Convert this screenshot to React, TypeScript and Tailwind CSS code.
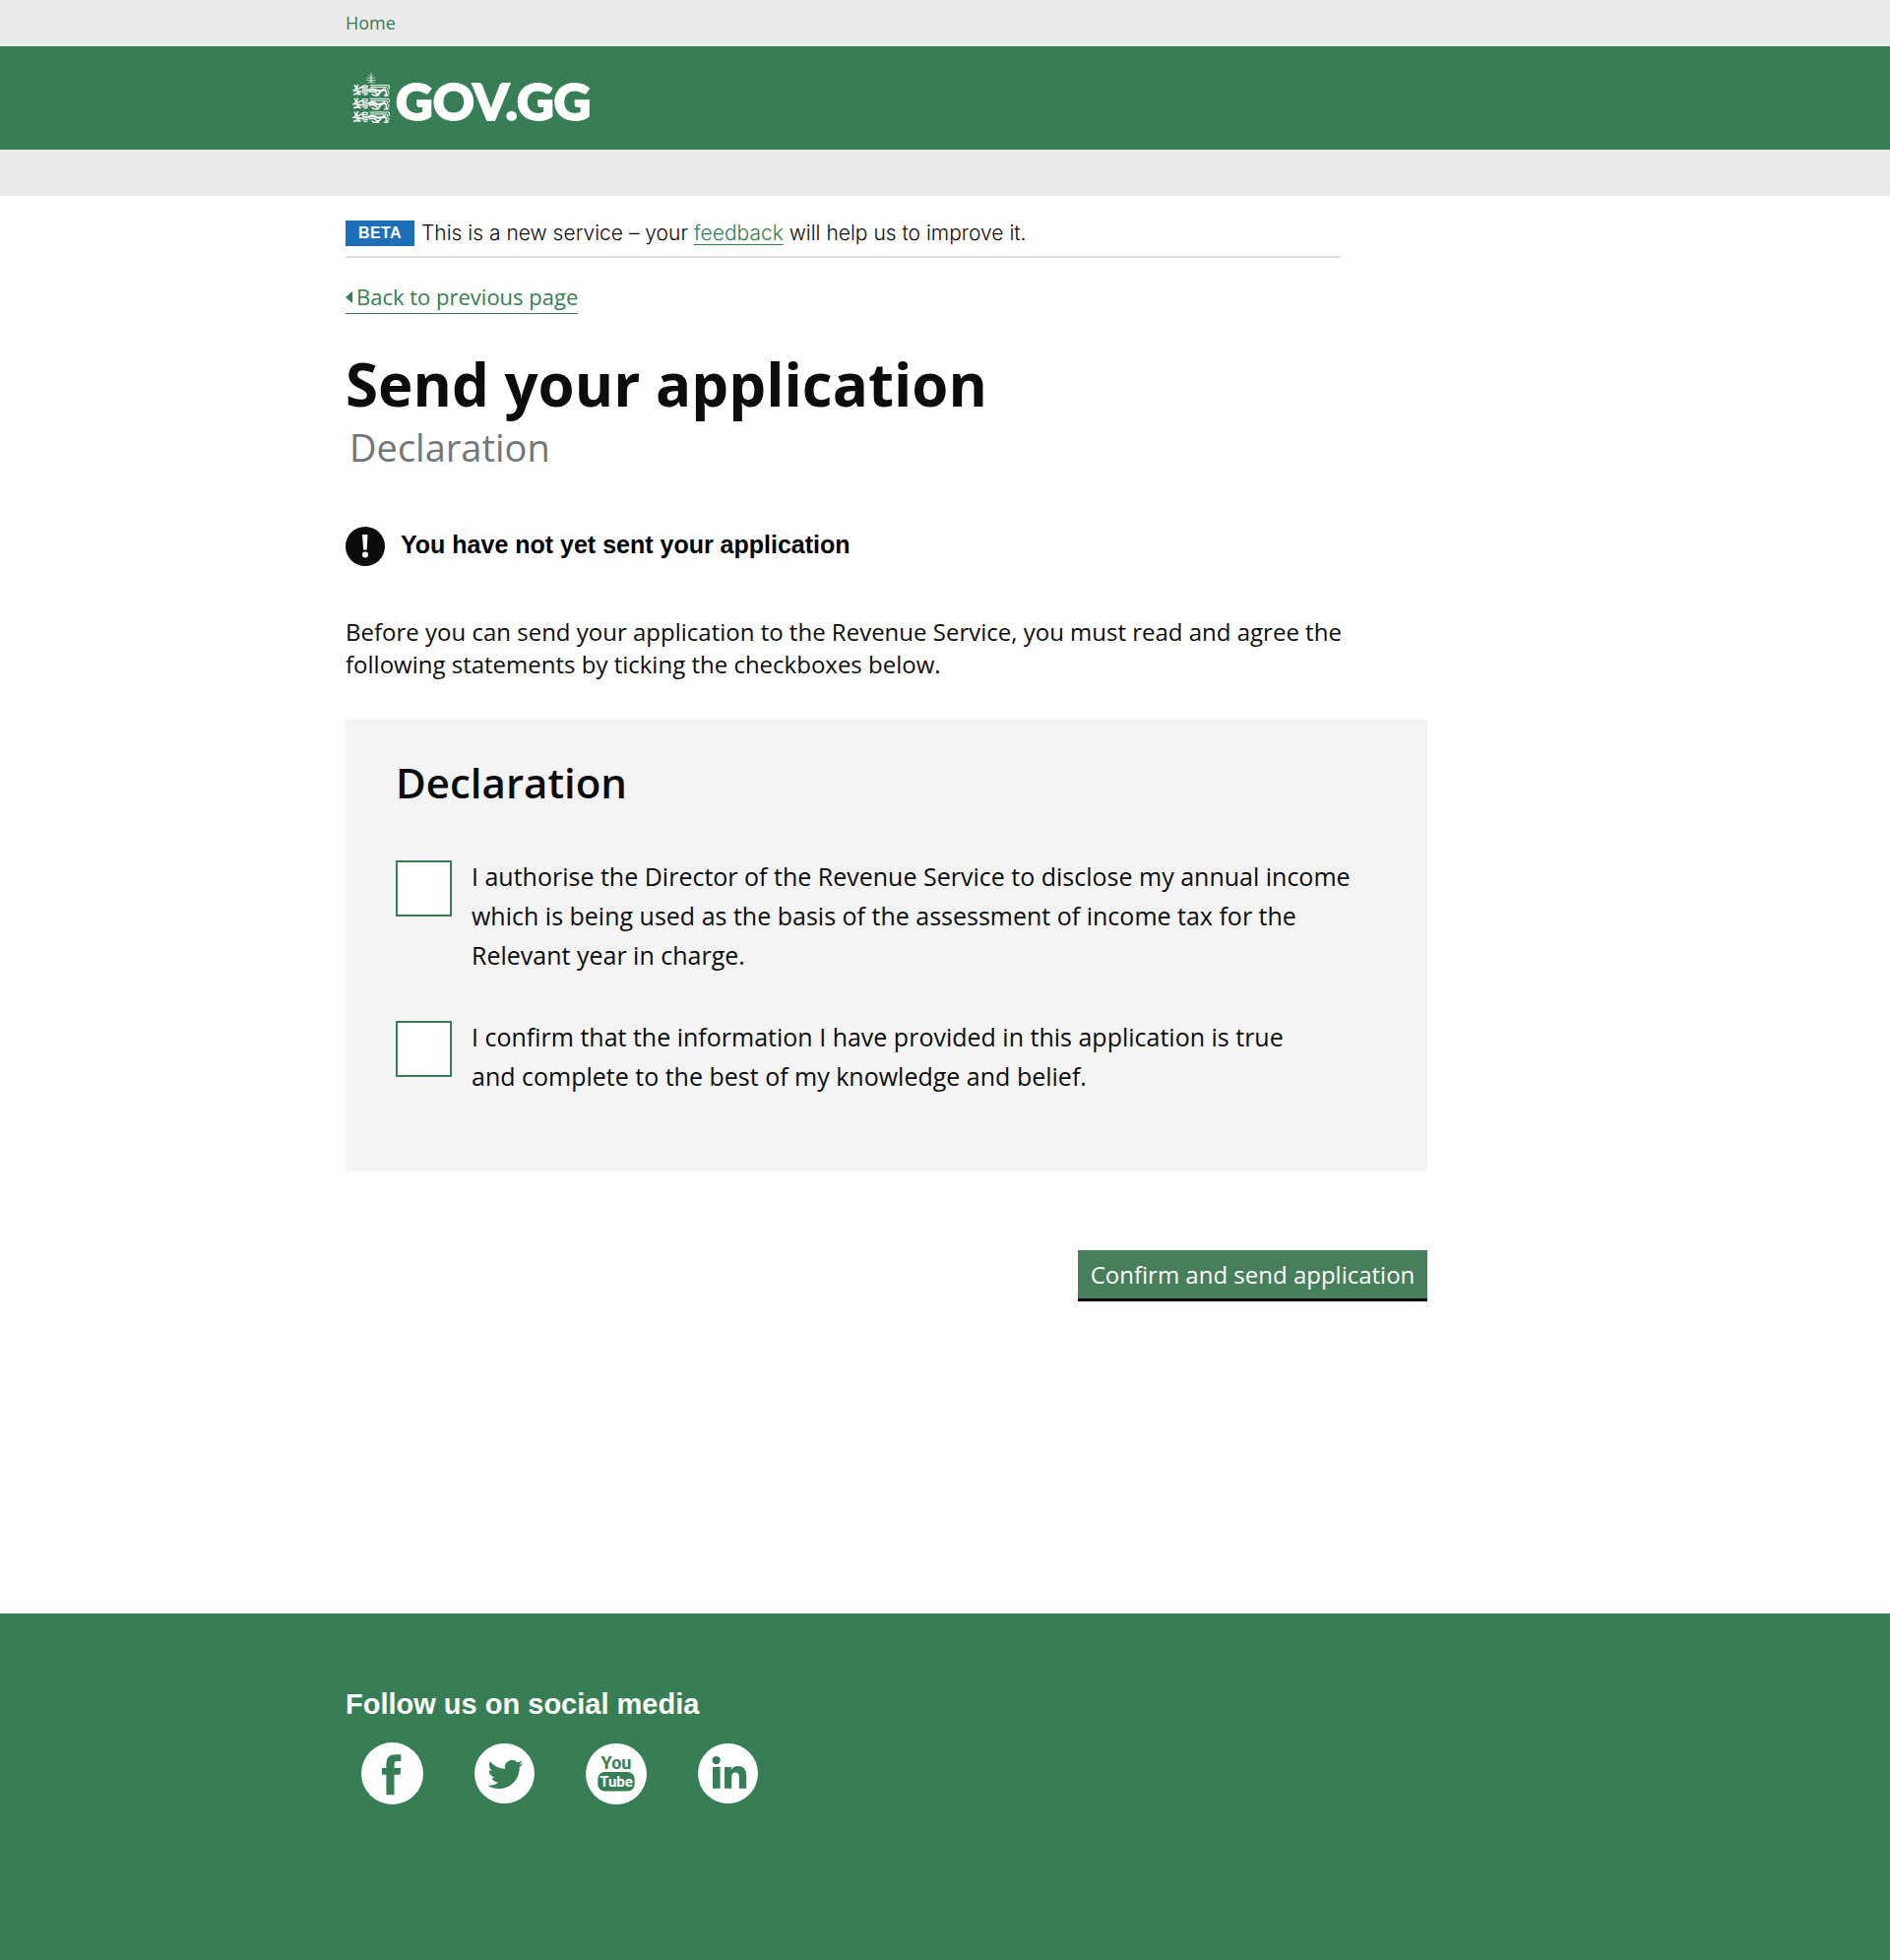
import React from "react";

function Lion() {
  return (
    <g fill="none" stroke="#fff" strokeLinecap="round" strokeLinejoin="round">
      <path d="M7 3 L11 8 L9 14 M17 2 L12 13 Q17 17 23 11 L33 8" strokeWidth="4.500" />
      <path d="M3 19 Q9 17 14 20 L26 22 M6 31 Q10 27 15 29 L24 30 M14 20 L19 26" strokeWidth="5" />
      <path d="M30 5 Q37 2 46 5 L45 10 Q38 9 32 13 M31 17 L46 15 M28 22 L47 20 M32 27 L46 25 M36 32 L46 30" strokeWidth="3.500" />
      <path d="M54 3 H110 M56 9 H102 Q108 9 108 14 L105 19" strokeWidth="3" />
      <path d="M50 17 Q60 12 72 18 Q86 23 98 15" strokeWidth="7" />
      <path d="M52 23 Q62 20 70 24 L74 29 M60 30 L66 34 H80 M98 18 Q107 22 102 28 L108 34 H98 M84 22 Q87 28 78 29" strokeWidth="4.500" />
      <path d="M112 4 V13 M110 20 Q114 24 110 29" strokeWidth="3" />
    </g>
  );
}

function Crest() {
  return (
    <svg viewBox="0 0 117 156" className="h-[52px] w-[39px]" aria-hidden="true">
      <g stroke="#fff" strokeWidth="2" strokeLinecap="round">
        <path d="M57 2 V31 M57 18 L46 14 M57 18 L68 14 M57 23 L44 22 M57 23 L70 22 M57 13 L51 8 M57 13 L63 8 M57 27 L48 30 M57 27 L66 30" />
      </g>
      <g transform="translate(0 35)"><Lion /></g>
      <g transform="translate(0 76)"><Lion /></g>
      <g transform="translate(0 117)"><Lion /></g>
    </svg>
  );
}

function Container({ children, className = "" }: { children: React.ReactNode; className?: string }) {
  return <div className={`mx-auto w-full max-w-[1218px] ${className}`}>{children}</div>;
}

function Statement({ id, children }: { id: string; children: React.ReactNode }) {
  return (
    <div className="flex items-start gap-5">
      <input
        id={id}
        type="checkbox"
        className="mt-1 size-[57px] shrink-0 appearance-none border-2 border-[#377d56] bg-white checked:bg-[#377d56]"
      />
      <label htmlFor={id} className="text-[25px] leading-10">
        {children}
      </label>
    </div>
  );
}

const social = [
  {
    name: "Facebook",
    size: "size-[63px]",
    art: (
      <path
        fill="#377d56"
        d="M25 52.500 V32.200 H20.700 V25.500 H25 V21 Q25 12 34 12 H39.700 V18.700 H36 Q33 18.700 33 21.700 V25.500 H39.700 L38.900 32.200 H33 V52.500 Z"
      />
    ),
  },
  {
    name: "Twitter",
    size: "size-[61px]",
    art: (
      <g transform="translate(13.700 13.700) scale(1.520)">
        <path
          fill="#377d56"
          d="M23.953 4.570a10 10 0 01-2.825.775 4.958 4.958 0 002.163-2.723c-.951.555-2.005.959-3.127 1.184a4.920 4.920 0 00-8.384 4.482C7.690 8.095 4.067 6.130 1.640 3.162a4.822 4.822 0 00-.666 2.475c0 1.710.870 3.213 2.188 4.096a4.904 4.904 0 01-2.228-.616v.060a4.923 4.923 0 003.946 4.827 4.996 4.996 0 01-2.212.085 4.936 4.936 0 004.604 3.417 9.867 9.867 0 01-6.102 2.105c-.390 0-.779-.023-1.170-.067a13.995 13.995 0 007.557 2.209c9.053 0 13.998-7.496 13.998-13.985 0-.210 0-.420-.015-.630A9.935 9.935 0 0024 4.590z"
        />
      </g>
    ),
  },
  {
    name: "YouTube",
    size: "size-[62px]",
    art: (
      <g className="font-['Liberation_Sans_Narrow',Roboto,sans-serif] font-bold" textAnchor="middle">
        <rect x="12.300" y="29" width="37.400" height="19.500" rx="7" fill="#377d56" />
        <text x="31" y="26" fontSize="18" fill="#377d56">
          You
        </text>
        <text x="31" y="44" fontSize="15" fill="#fff">
          Tube
        </text>
      </g>
    ),
  },
  {
    name: "LinkedIn",
    size: "size-[61px]",
    art: (
      <g fill="#377d56">
        <circle cx="19" cy="17.300" r="4.200" />
        <path d="M15.300 24.300 H23 V46.500 H15.300 Z M27.500 24.300 H34.500 V27.300 Q36.800 23.500 41.200 23.500 Q50 23.500 50 33 V46.500 H42.500 V34.500 Q42.500 30 38.700 30 Q34.800 30 34.800 35 V46.500 H27.500 Z" />
      </g>
    ),
  },
];

export default function App() {
  return (
    <div className="flex min-h-screen flex-col bg-white font-['Open_Sans',sans-serif] text-[#0b0c0c]">
      <nav className="bg-[#ebebeb]" aria-label="Breadcrumb">
        <Container>
          <a href="#home" className="block w-fit text-lg leading-[47px] text-[#377d56]">
            Home
          </a>
        </Container>
      </nav>
      <header className="bg-[#377d56]">
        <Container className="flex h-[105px] items-center">
          <a href="#gov" aria-label="GOV.GG" className="ml-[7px] flex items-center gap-[5px] text-white">
            <Crest />
            <span className="pt-1 font-['Lato',sans-serif] text-[52px] leading-[52px] font-black [-webkit-text-stroke:2px_#fff]">
              GOV.GG
            </span>
          </a>
        </Container>
      </header>
      <div className="h-[47px] bg-[#ebebeb]" />

      <main className="pb-[317px]">
        <Container>
          <div className="max-w-[1099px]">
            <div className="flex max-w-[1011px] items-center gap-[7px] border-b-2 border-[#dee0e2] pt-[25px] pb-[10px]">
              <strong className="w-[70px] bg-[#1d70b8] text-center font-['Liberation_Sans',sans-serif] text-base leading-[26px] tracking-wide text-white">
                BETA
              </strong>
              <p className="font-['Inter',sans-serif] text-[21px] leading-[26px] font-light">
                This is a new service – your{" "}
                <a href="#feedback" className="text-[#377d56] underline decoration-1 underline-offset-4">
                  feedback
                </a>{" "}
                will help us to improve it.
              </p>
            </div>

            <a
              href="#back"
              className="mt-6 flex w-fit items-center gap-1 border-b border-[#377d56] pb-px text-[22px] leading-[31px] text-[#377d56]"
            >
              <svg viewBox="0 0 7 12" className="h-3 w-[7px]" aria-hidden="true">
                <path d="M7 0 V12 L0 6 Z" fill="currentColor" />
              </svg>
              Back to previous page
            </a>

            <h1 className="mt-[35px] text-[60px] leading-[72px] font-bold">Send your application</h1>
            <p className="mt-1 pl-1 text-[38px] leading-[48px] text-[#6f777b]">Declaration</p>

            <div className="mt-[57px] flex items-start gap-4 font-['Liberation_Sans',sans-serif]">
              <svg viewBox="0 0 40 40" className="size-10" aria-hidden="true">
                <circle cx="20" cy="20" r="20" fill="#0b0c0c" />
                <path d="M17 8 H22.500 L21.700 23.500 H18.200 Z" fill="#fff" />
                <circle cx="20" cy="28.500" r="3" fill="#fff" />
              </svg>
              <strong className="text-[25px] leading-9 text-black">You have not yet sent your application</strong>
            </div>

            <p className="mt-[50px] max-w-[1030px] text-2xl leading-[33px]">
              Before you can send your application to the Revenue Service, you must read and agree the following
              statements by ticking the checkboxes below.
            </p>

            <form>
              <section className="mt-10 bg-[#f4f4f4] px-[51px] pt-9 pb-[77px]">
                <h2 className="text-[42px] leading-[56px] font-semibold">Declaration</h2>
                <div className="mt-[47px] flex max-w-[980px] flex-col gap-[43px]">
                  <Statement id="authorise">
                    I authorise the Director of the Revenue Service to disclose my annual income which is being used
                    as the basis of the assessment of income tax for the Relevant year in charge.
                  </Statement>
                  <Statement id="confirm">
                    I confirm that the information I have provided in this application is true
                    <br />
                    and complete to the best of my knowledge and belief.
                  </Statement>
                </div>
              </section>
              <div className="mt-20 flex justify-end">
                <button type="button" className="h-[52px] w-[355px] border-b-3 border-black bg-[#477e5b] text-2xl text-white">
                  Confirm and send application
                </button>
              </div>
            </form>
          </div>
        </Container>
      </main>

      <footer className="flex-1 bg-[#377d56] pt-[72px] pb-20 text-white">
        <Container>
          <h2 className="font-['Liberation_Sans',sans-serif] text-[29px] leading-10 font-bold">Follow us on social media</h2>
          <ul className="mt-[19px] ml-4 flex items-center gap-[52px]">
            {social.map((item) => (
              <li key={item.name}>
                <a href={`#${item.name.toLowerCase()}`} aria-label={item.name} className={`block rounded-full bg-white ${item.size}`}>
                  <svg viewBox="0 0 62 62" className="size-full" aria-hidden="true">
                    {item.art}
                  </svg>
                </a>
              </li>
            ))}
          </ul>
        </Container>
      </footer>
    </div>
  );
}
